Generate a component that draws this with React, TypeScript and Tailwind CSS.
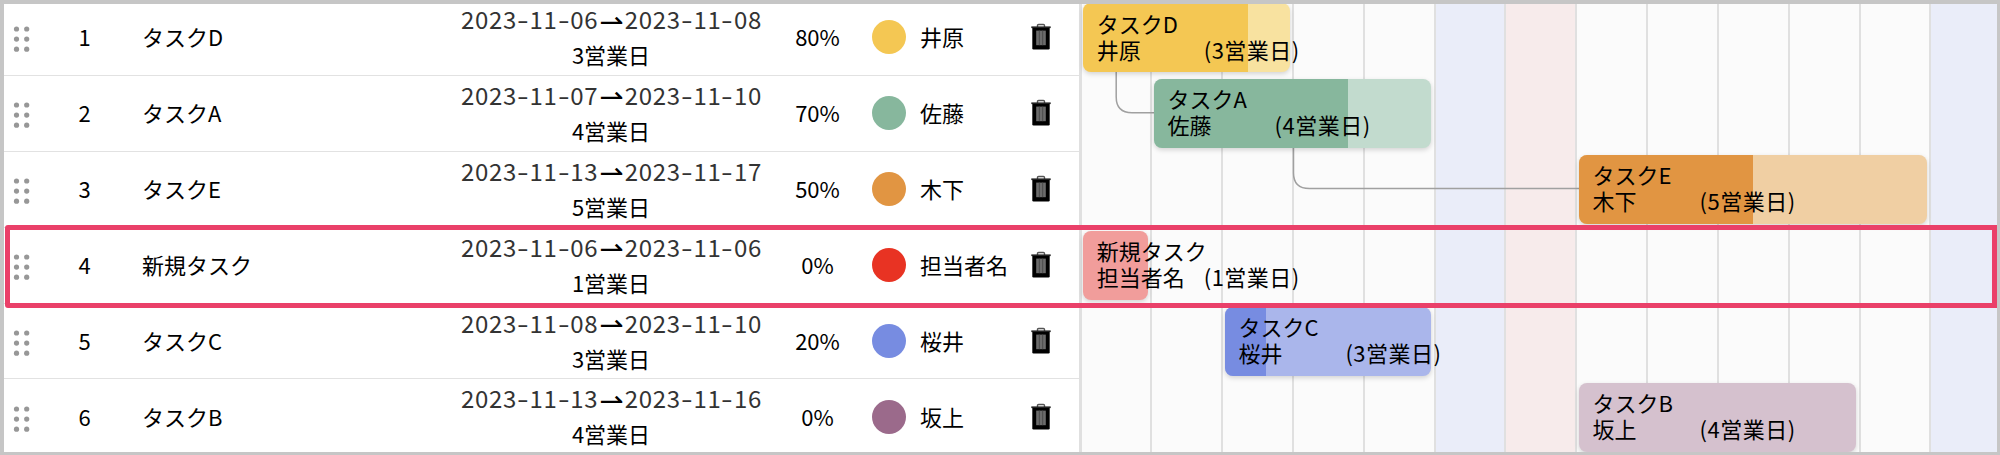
interface Task {
  id: number;
  name: string;
  start: string;
  end: string;
  days: number;
  progress: number;
  owner: string;
  color: string;
  light: string;
  left: number;
  width: number;
}

const DAY_WIDTH = 70.83;
const ROW_HEIGHT = 75.9;

const tasks: Task[] = [
  { id: 1, name: 'タスクD', start: '2023-11-06', end: '2023-11-08', days: 3, progress: 80, owner: '井原', color: '#f4c753', light: '#f8e2a0', left: 3.6, width: 206.5 },
  { id: 2, name: 'タスクA', start: '2023-11-07', end: '2023-11-10', days: 4, progress: 70, owner: '佐藤', color: '#87b79d', light: '#c2dbce', left: 74.4, width: 277.5 },
  { id: 3, name: 'タスクE', start: '2023-11-13', end: '2023-11-17', days: 5, progress: 50, owner: '木下', color: '#e19542', light: '#f0cfa3', left: 499.4, width: 348.3 },
  { id: 4, name: '新規タスク', start: '2023-11-06', end: '2023-11-06', days: 1, progress: 0, owner: '担当者名', color: '#e83323', light: '#f19d9b', left: 3.6, width: 65 },
  { id: 5, name: 'タスクC', start: '2023-11-08', end: '2023-11-10', days: 3, progress: 20, owner: '桜井', color: '#778ce1', light: '#aab6eb', left: 145.3, width: 206.5 },
  { id: 6, name: 'タスクB', start: '2023-11-13', end: '2023-11-16', days: 4, progress: 0, owner: '坂上', color: '#9b6a8b', light: '#d5c1ce', left: 499.4, width: 277.5 },
];

// Monday 6th through Saturday 18th
const dayColors = ['#fbfbfb', '#fbfbfb', '#fbfbfb', '#fbfbfb', '#fbfbfb', '#eaedf9', '#f7ebeb', '#fbfbfb', '#fbfbfb', '#fbfbfb', '#fbfbfb', '#fbfbfb', '#eaedf9'];

function GripIcon() {
  return (
    <svg width="18" height="28" viewBox="0 0 18 28" fill="#979797">
      {[4, 14.1, 24.2].map((y) => (
        <g key={y}>
          <circle cx="3.5" cy={y} r="2.6" />
          <circle cx="13.7" cy={y} r="2.6" />
        </g>
      ))}
    </svg>
  );
}

function TrashIcon() {
  return (
    <svg width="20" height="28" viewBox="0 0 20 28">
      <path d="M6.5 4V2.6Q6.5 1.5 7.6 1.5h4.8q1.1 0 1.1 1.1V4" fill="none" stroke="#555" strokeWidth="1.4" />
      <path d="M.3 3.4h19.4v1.7H.3z" fill="#222" />
      <path d="M1.3 5h17.4v20.2q0 1.2-1.2 1.2H2.5q-1.2 0-1.2-1.2z" fill="#000" />
      <path d="M5.2 7.6h9.6v14.6H5.2z" fill="#6c6c6c" />
      <path d="M8.3 7.6v14.6M11.7 7.6v14.6" stroke="#4c4c4c" strokeWidth="1" />
    </svg>
  );
}

function DateText({ value }: { value: string }) {
  const [year, month, day] = value.split('-');
  return (
    <span className="inline-flex">
      <span>{year}</span>
      <span className="w-[12.5px] text-center scale-x-140">-</span>
      <span>{month}</span>
      <span className="w-[12.5px] text-center scale-x-140">-</span>
      <span>{day}</span>
    </span>
  );
}

function TaskRow({ task }: { task: Task }) {
  return (
    <div className="flex items-center shrink-0 border-b-[1.5px] border-[#e2e2e2]" style={{ height: ROW_HEIGHT }}>
      <div className="w-[56px] pl-[13px] pt-[4px]">
        <GripIcon />
      </div>
      <div className="w-[57px] pb-[2px] text-center">{task.id}</div>
      <div className="w-[347px] pb-[2px] pl-[29px]">{task.name}</div>
      <div className="w-[302px] h-full pt-[1px] overflow-hidden">
        <div className="h-[35px] pl-[1px] flex items-center text-[24px] leading-[35px] tracking-[0.7px] text-[#333] whitespace-nowrap">
          <DateText value={task.start} />
          <span className="w-[27px] pt-[7px] flex justify-center font-['DejaVu_Sans'] text-[29px] leading-[35px] tracking-normal text-black">⇀</span>
          <DateText value={task.end} />
        </div>
        <div className="h-[35px] leading-[36px] text-center">{task.days}営業日</div>
      </div>
      <div className="w-[110px] pl-[1px] pb-[2px] text-center">{task.progress}%</div>
      <div className="w-[34px] h-[34px] rounded-full" style={{ backgroundColor: task.color }} />
      <div className="w-[125px] pb-[2px] pl-[14px] whitespace-nowrap">{task.owner}</div>
      <TrashIcon />
    </div>
  );
}

function TaskBar({ task, index }: { task: Task; index: number }) {
  return (
    <div
      className="absolute h-[69px] rounded-[8px] shadow-[0_2px_5px_rgba(0,0,0,0.16)]"
      style={{ left: task.left, top: index * ROW_HEIGHT + 3, width: task.width, backgroundColor: task.light }}
    >
      <div className="h-full overflow-hidden rounded-[8px]">
        <div className="h-full" style={{ width: `${task.progress}%`, backgroundColor: task.color }} />
      </div>
      <div className="absolute left-[13.6px] top-[6.5px] leading-[26px] whitespace-nowrap">
        <div>{task.name}</div>
        <div className="flex">
          <span className="w-[107px]">{task.owner}</span>
          <span className="tracking-[0.5px]">({task.days}営業日)</span>
        </div>
      </div>
    </div>
  );
}

export default function App() {
  return (
    <div className="relative flex w-[2000px] h-[455px] overflow-hidden bg-white text-black text-[22px] leading-[26px] font-['Noto_Sans_CJK_JP',sans-serif]">
      <div className="flex flex-col w-[1078.5px] shrink-0">
        {tasks.map((task) => (
          <TaskRow key={task.id} task={task} />
        ))}
      </div>

      <div className="w-px shrink-0 bg-[#e0e0e0]" />
      <div className="relative flex flex-1">
        {dayColors.map((color, i) => (
          <div
            key={i}
            className="shrink-0 h-full border-l-2 border-[#e0e0e0]"
            style={{ width: DAY_WIDTH, backgroundColor: color }}
          />
        ))}
        <svg className="absolute left-0 top-0" width="920" height="455" fill="none" stroke="#a0a0a0" strokeWidth="1.5">
          <path d="M36.2 70V97Q36.2 112.7 52 112.7H75" />
          <path d="M213.5 146V173Q213.5 188.6 229.5 188.6H500" />
        </svg>
        {tasks.map((task, i) => (
          <TaskBar key={task.id} task={task} index={i} />
        ))}
      </div>

      <div className="absolute inset-0 border-[#c6c6c6] border-t-4 border-l-4 border-r-3 border-b-3" />
      <div className="absolute left-[5px] top-[225px] w-[1992px] h-[82.5px] border-[5.5px] border-[#ea4069] rounded-l-[3px]" />
    </div>
  );
}
